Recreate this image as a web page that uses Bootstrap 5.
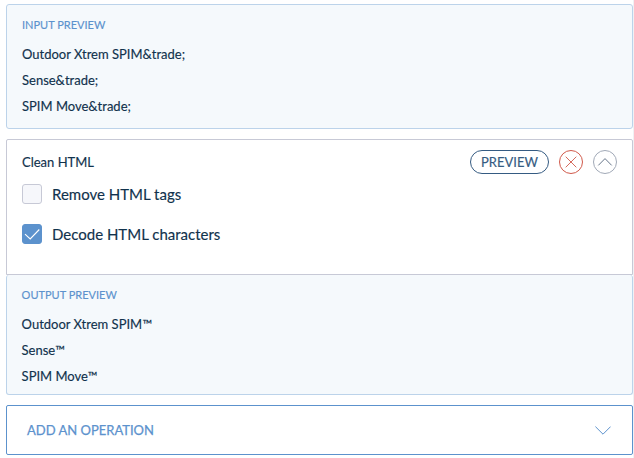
<!DOCTYPE html>
<html lang="en">
<head>
<meta charset="utf-8">
<meta name="viewport" content="width=device-width, initial-scale=1">
<title>Clean HTML</title>
<link href="https://cdn.jsdelivr.net/npm/bootstrap@5.3.0/dist/css/bootstrap.min.css" rel="stylesheet">
<style>
body{font-family:Lato,sans-serif;font-size:13px;color:#11324d;background:#fff;line-height:26px;-webkit-text-stroke:.15px currentColor}
.rules{height:458px;padding:4px 0 0 6px;border-right:1px solid #f0f1f4;overflow:hidden}
.preview-box{background:#f5f9fc;border:1px solid #bcd3ea;border-radius:3px;padding:7px 15px 0}
.box-in{height:125px;margin-bottom:10px}
.box-out{height:120px;margin-bottom:10px;border-top:0;border-radius:3px;padding-left:14.6px}
.preview-title{font-size:11px;line-height:26px;color:#5c92cd;margin-bottom:3px}
.operation{height:136px;border:1px solid #c7c9d6;border-radius:2px 2px 0 0;padding:10px 15px 0}
.operation-head{height:24px;gap:10px;margin-bottom:10px}
.btn-preview{height:24px;width:79px;padding:0;border:1px solid #355b82;color:#355b82;font-size:13px;line-height:22px}
.btn-round{width:24px;height:24px;padding:0;border:0;line-height:0}
.option{font-size:15px;line-height:20px;min-height:20px;gap:10px}
.option + .option{margin-top:20px}
.option .form-check-input{width:20px;height:20px;margin:0;border:1px solid #c7c9d6;border-radius:3px;background-color:#f6f7fb;flex:none}
.option .form-check-input:checked{background-color:#5c92cd;border-color:#5c92cd;background-image:url("data:image/svg+xml,%3Csvg xmlns='http://www.w3.org/2000/svg' viewBox='0 0 18 18'%3E%3Cpath d='M2 9.2 7.2 14 16.3 4.5' fill='none' stroke='white' stroke-width='1.1'/%3E%3C/svg%3E")}
.add-operation{height:50px;border:1px solid #5c92cd;border-radius:2px;color:#5c92cd;font-size:13px;padding:0 21px 0 20px;background:#fff;-webkit-text-stroke:.25px currentColor}
</style>
</head>
<body>
<main class="rules">
  <section class="preview-box box-in">
    <h2 class="preview-title fw-normal">INPUT PREVIEW</h2>
    <div>Outdoor Xtrem SPIM&amp;trade;</div>
    <div>Sense&amp;trade;</div>
    <div>SPIM Move&amp;trade;</div>
  </section>
  <section class="operation">
    <div class="operation-head d-flex align-items-center">
      <span class="me-auto">Clean HTML</span>
      <button type="button" class="btn btn-preview rounded-pill">PREVIEW</button>
      <button type="button" class="btn btn-round" aria-label="Remove">
        <svg width="24" height="24" fill="none" stroke="#d0594a"><circle cx="12" cy="12" r="11.5"/><path d="m6.7 6.7 10.6 10.6m0-10.6L6.7 17.3" stroke-width=".9"/></svg>
      </button>
      <button type="button" class="btn btn-round" aria-label="Collapse">
        <svg width="24" height="24" fill="none"><circle cx="12" cy="12" r="11.5" stroke="#a1a9b7"/><path d="m5.3 15.4 6.7-6.8 6.7 6.8" stroke="#67768a"/></svg>
      </button>
    </div>
    <label class="option d-flex align-items-center">
      <input class="form-check-input" type="checkbox"><span>Remove HTML tags</span>
    </label>
    <label class="option d-flex align-items-center">
      <input class="form-check-input" type="checkbox" checked><span>Decode HTML characters</span>
    </label>
  </section>
  <section class="preview-box box-out">
    <h2 class="preview-title fw-normal">OUTPUT PREVIEW</h2>
    <div>Outdoor Xtrem SPIM™</div>
    <div>Sense™</div>
    <div>SPIM Move™</div>
  </section>
  <button type="button" class="add-operation d-flex w-100 align-items-center justify-content-between">
    <span>ADD AN OPERATION</span>
    <svg width="16" height="9" fill="none" stroke="#5c92cd"><path d="m.4.6 7.6 7.6L15.6.6"/></svg>
  </button>
</main>
<script src="https://cdn.jsdelivr.net/npm/bootstrap@5.3.0/dist/js/bootstrap.bundle.min.js"></script>
</body>
</html>
